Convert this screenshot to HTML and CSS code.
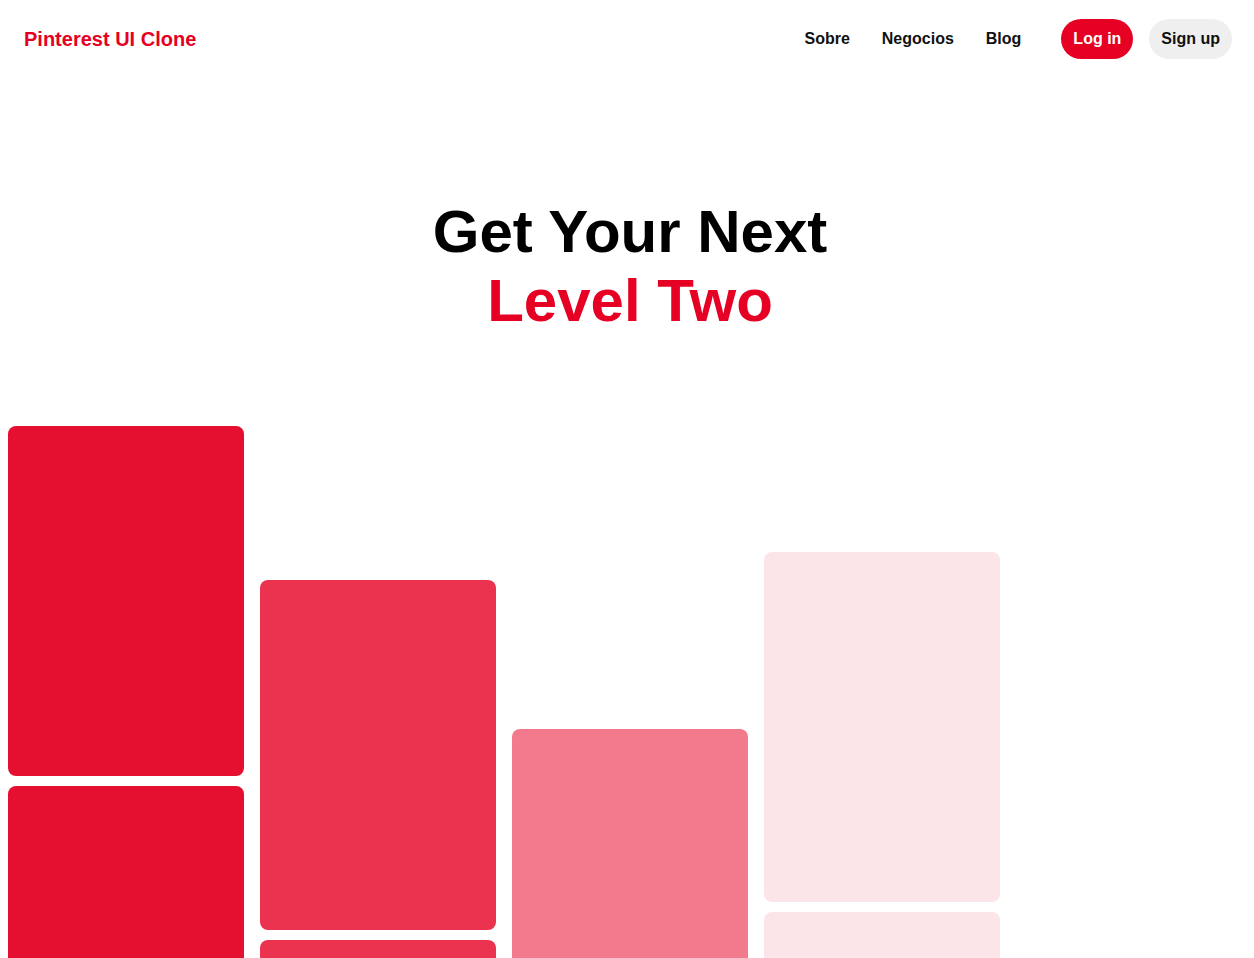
FILE: index.html
```html
<!DOCTYPE html>
<html lang="es">
<head>
<meta charset="utf-8">
<title>Pinterest UI Clone</title>
<link rel="stylesheet" href="styles.css">
</head>
<body>
<header class="header">
  <div class="logo">Pinterest UI Clone</div>
  <nav class="nav">
    <a class="nav-link" href="#">Sobre</a>
    <a class="nav-link" href="#">Negocios</a>
    <a class="nav-link" href="#">Blog</a>
    <div class="actions">
      <button class="btn btn-login">Log in</button>
      <button class="btn btn-signup">Sign up</button>
    </div>
  </nav>
</header>
<main>
  <section class="hero">
    <h1 class="title">Get Your Next<br><span class="accent">Level Two</span></h1>
  </section>
  <section class="grid">
    <div class="col col-1">
      <div class="pin"></div>
      <div class="pin"></div>
    </div>
    <div class="col col-2">
      <div class="pin"></div>
      <div class="pin"></div>
    </div>
    <div class="col col-3">
      <div class="pin"></div>
      <div class="pin"></div>
    </div>
    <div class="col col-4">
      <div class="pin"></div>
      <div class="pin"></div>
    </div>
  </section>
</main>
</body>
</html>
```

FILE: styles.css
```css
html {
  background: #ffffff;
  overflow: hidden;
}
body {
  margin: 8px;
  font-family: "Liberation Sans", Arial, sans-serif;
  color: #111111;
}
.header {
  display: flex;
  align-items: center;
  justify-content: space-between;
  height: 62px;
  padding: 0 14px 0 16px;
}
.logo {
  color: #e60023;
  font-weight: 700;
  font-size: 20px;
}
.nav {
  display: flex;
  align-items: center;
}
.nav-link {
  color: #111111;
  text-decoration: none;
  font-weight: 700;
  font-size: 16px;
  margin-left: 32px;
}
.actions {
  display: flex;
  gap: 16px;
  margin-left: 40px;
}
.btn {
  border: none;
  height: 40px;
  padding: 0 12px;
  border-radius: 24px;
  font-family: inherit;
  font-weight: 700;
  font-size: 16px;
}
.btn-login {
  background: #e60023;
  color: #ffffff;
}
.btn-signup {
  background: #efefef;
  color: #111111;
}
.hero {
  padding-top: 127px;
  padding-left: 6px;
  text-align: center;
}
.title {
  margin: 0;
  font-size: 60px;
  line-height: 69px;
  font-weight: 700;
  color: #000000;
}
.accent {
  color: #e60023;
}
.grid {
  display: flex;
  gap: 16px;
  margin-top: 91px;
}
.col {
  width: 236px;
  display: flex;
  flex-direction: column;
  gap: 10px;
}
.pin {
  height: 350px;
  border-radius: 8px;
  flex-shrink: 0;
}
.col-1 .pin { background: #e51030; }
.col-2 { padding-top: 154px; }
.col-2 .pin { background: #eb334f; }
.col-3 { padding-top: 303px; }
.col-3 .pin { background: #f37a8c; }
.col-4 { padding-top: 126px; }
.col-4 .pin { background: #fbe5e8; }
```
